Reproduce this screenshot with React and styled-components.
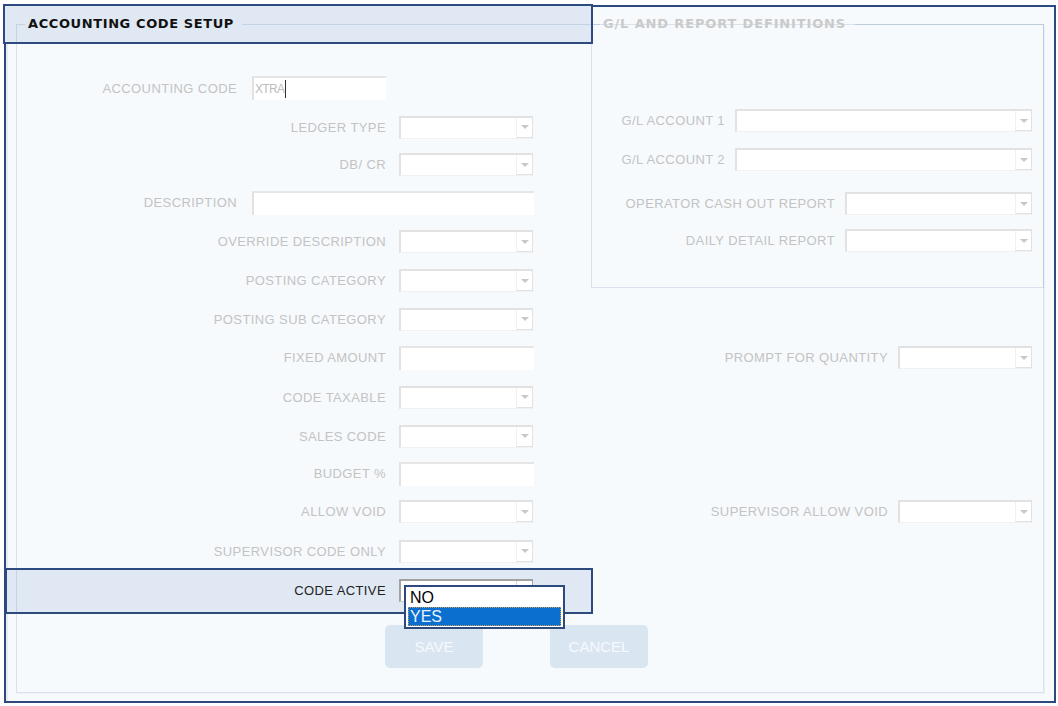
import styled, { createGlobalStyle } from 'styled-components';

const GlobalStyle = createGlobalStyle`
  html, body {
    margin: 0;
    padding: 0;
    background: #ffffff;
  }

  body {
    font-family: 'Liberation Sans', Arial, sans-serif;
  }

  * {
    box-sizing: border-box;
  }
`;

const topRows = [
  { label: 'ACCOUNTING CODE', kind: 'input', width: 134, height: 40, wide: true, value: 'XTRA', caret: true },
  { label: 'LEDGER TYPE', height: 38 },
  { label: 'DB/ CR', height: 37 },
  { label: 'DESCRIPTION', kind: 'input', width: 282, height: 39, wide: true },
  { label: 'OVERRIDE DESCRIPTION', height: 39 },
  { label: 'POSTING CATEGORY', height: 39 }
];

const bottomRows = [
  { label: 'POSTING SUB CATEGORY', height: 38 },
  { label: 'FIXED AMOUNT', kind: 'input', height: 39, right: 'PROMPT FOR QUANTITY' },
  { label: 'CODE TAXABLE', height: 40 },
  { label: 'SALES CODE', height: 38 },
  { label: 'BUDGET %', kind: 'input', height: 37 },
  { label: 'ALLOW VOID', height: 39, right: 'SUPERVISOR ALLOW VOID' },
  { label: 'SUPERVISOR CODE ONLY', height: 40 },
  { label: 'CODE ACTIVE', height: 39, active: true }
];

const glRows = [
  { label: 'G/L ACCOUNT 1', width: 297, mt: 0 },
  { label: 'G/L ACCOUNT 2', width: 297, mt: 16 },
  { label: 'OPERATOR CASH OUT REPORT', width: 187, mt: 21 },
  { label: 'DAILY DETAIL REPORT', width: 187, mt: 14 }
];

const Select = ({ width = 134, strong, children }) => (
  <SelectBox $width={width} $strong={strong}>
    <SelectValue />
    <ArrowBox $strong={strong} />
    {children}
  </SelectBox>
);

const Control = ({ row }) => {
  if (row.kind === 'input') {
    return (
      <TextInput $width={row.width || 135}>
        {row.value && <InputText>{row.value}</InputText>}
        {row.caret && <Caret />}
      </TextInput>
    );
  }

  if (row.active) {
    return (
      <Select strong>
        <DropList>
          <DropItem>NO</DropItem>
          <DropItem $selected>YES</DropItem>
        </DropList>
      </Select>
    );
  }

  return <Select />;
};

const LeftField = ({ row }) => (
  <FieldRow $labelWidth={row.wide ? 220 : 369} $gap={row.wide ? 15 : 13}>
    <Label $active={row.active}>{row.label}</Label>
    <Control row={row} />
  </FieldRow>
);

export default function App() {
  return (
    <Page>
      <GlobalStyle />
      <Frame>
        <Highlight $left={-3} $top={-3} $width={590} $height={40} />
        <Highlight $left={-1} $top={561} $width={588} $height={46} />

        <Group>
          <Legend>ACCOUNTING CODE SETUP</Legend>
          <Body>
            <TopSection>
              <LeftStack>
                {topRows.map((row) => (
                  <RowSlot key={row.label} $height={row.height}>
                    <LeftField row={row} />
                  </RowSlot>
                ))}
              </LeftStack>

              <GLGroup>
                <Legend $muted $after={9} $spacing={0.85}>
                  G/L AND REPORT DEFINITIONS
                </Legend>
                <GLBody>
                  {glRows.map((row) => (
                    <RightRow key={row.label} $mt={row.mt}>
                      <Label>{row.label}</Label>
                      <Select width={row.width} />
                    </RightRow>
                  ))}
                </GLBody>
              </GLGroup>
            </TopSection>

            {bottomRows.map((row) => (
              <SplitRow key={row.label} $height={row.height}>
                <LeftField row={row} />
                {row.right && (
                  <RightRow>
                    <Label>{row.right}</Label>
                    <Select />
                  </RightRow>
                )}
              </SplitRow>
            ))}

            <ButtonBar>
              <Button>SAVE</Button>
              <Button>CANCEL</Button>
            </ButtonBar>
          </Body>
        </Group>
      </Frame>
    </Page>
  );
}

const Page = styled.div`
  width: 1058px;
  height: 706px;
  padding: 5px 2px 3px 4px;
`;

const Frame = styled.div`
  position: relative;
  z-index: 0;
  display: flex;
  flex-direction: column;
  height: 698px;
  padding: 9px 10px 8px 10px;
  border: 2px solid #2c4a7e;
  background: #f7fafd;
  box-shadow: inset 2px 0 0 #e8ecf1;
`;

const Highlight = styled.div`
  position: absolute;
  z-index: -1;
  left: ${(props) => props.$left}px;
  top: ${(props) => props.$top}px;
  width: ${(props) => props.$width}px;
  height: ${(props) => props.$height}px;
  border: 2px solid #2c4a7e;
  background: #dfe8f3;
  pointer-events: none;
`;

const Group = styled.fieldset`
  flex: 1;
  min-width: 0;
  margin: 0;
  padding: 0;
  border: 1px solid rgba(50, 95, 150, 0.15);
  box-shadow: 1px 1px 0 rgba(50, 95, 150, 0.06);
`;

const Legend = styled.legend`
  margin-left: 8px;
  padding: 0 ${(props) => props.$after || 8}px 0 3px;
  font-family: 'DejaVu Sans', Verdana, sans-serif;
  font-size: 13px;
  font-weight: bold;
  line-height: 16px;
  letter-spacing: ${(props) => props.$spacing || 0.6}px;
  color: ${(props) => (props.$muted ? '#cacaca' : '#111111')};
`;

const Body = styled.div`
  display: flex;
  flex-direction: column;
`;

const TopSection = styled.div`
  display: grid;
  grid-template-columns: 574px 1fr;
  align-items: start;
`;

const LeftStack = styled.div`
  padding-top: 36px;
`;

const RowSlot = styled.div`
  height: ${(props) => props.$height}px;
`;

const GLGroup = styled(Group)`
  flex: none;
  height: 272px;
  margin: -16px -1px 0 0;
  box-shadow: none;
`;

const GLBody = styled.div`
  display: flex;
  flex-direction: column;
  padding-top: 77px;
`;

const SplitRow = styled.div`
  display: grid;
  grid-template-columns: 574px 1fr;
  align-items: center;
  height: ${(props) => props.$height}px;
`;

const FieldRow = styled.div`
  display: grid;
  grid-template-columns: ${(props) => props.$labelWidth}px auto;
  column-gap: ${(props) => props.$gap}px;
  align-items: center;
  justify-items: start;
  height: 100%;
`;

const RightRow = styled.div`
  display: flex;
  justify-content: flex-end;
  align-items: center;
  gap: 10px;
  height: 23px;
  margin-top: ${(props) => props.$mt || 0}px;
  padding-right: 11px;
`;

const Label = styled.span`
  justify-self: end;
  font-size: 13px;
  letter-spacing: 0.4px;
  white-space: nowrap;
  color: ${(props) => (props.$active ? '#222222' : '#c3c3c3')};
`;

const SelectBox = styled.div`
  position: relative;
  display: flex;
  width: ${(props) => props.$width}px;
  height: 23px;
  background: #ffffff;
  border: 1px solid ${(props) => (props.$strong ? '#a2a2a2' : '#e2e2e2')};
  border-top-width: 2px;
  border-left-width: 2px;
  border-bottom-color: ${(props) => (props.$strong ? '#d0d0d0' : '#f1f1f1')};
`;

const SelectValue = styled.div`
  flex: 1;
`;

const ArrowBox = styled.div`
  display: flex;
  align-items: center;
  justify-content: center;
  width: 16px;
  border-left: 1px solid ${(props) => (props.$strong ? '#d4d4d4' : '#f0f0f0')};
  border-bottom: 1px solid ${(props) => (props.$strong ? '#b8b8b8' : '#e2e2e2')};

  &::after {
    content: '';
    border-left: 4px solid transparent;
    border-right: 4px solid transparent;
    border-top: 4px solid ${(props) => (props.$strong ? '#777777' : '#c8c8c8')};
  }
`;

const TextInput = styled.div`
  display: flex;
  align-items: center;
  width: ${(props) => props.$width}px;
  height: 24px;
  padding-left: 1px;
  background: #ffffff;
  border-top: 2px solid #e6e6e6;
  border-left: 2px solid #e2e2e2;
`;

const InputText = styled.span`
  font-size: 12px;
  letter-spacing: -0.7px;
  color: #bdbdbd;
`;

const Caret = styled.span`
  width: 1px;
  height: 18px;
  margin-left: 1px;
  background: #333333;
`;

const DropList = styled.div`
  position: absolute;
  top: 4px;
  left: 3px;
  z-index: 2;
  width: 161px;
  height: 44px;
  padding: 1px 2px;
  background: #ffffff;
  border: 2px solid #2c4a7e;
`;

const DropItem = styled.div`
  height: 19px;
  padding-left: 2px;
  font-size: 16px;
  line-height: 19px;
  color: ${(props) => (props.$selected ? '#eaf2fb' : '#000000')};
  background: ${(props) => (props.$selected ? '#0b6fcf' : 'transparent')};
  outline: ${(props) => (props.$selected ? '1px dotted #c99a5a' : 'none')};
  outline-offset: -1px;
`;

const ButtonBar = styled.div`
  display: flex;
  gap: 67px;
  margin-top: 15px;
  padding-left: 368px;
`;

const Button = styled.button`
  width: 98px;
  height: 43px;
  border: none;
  border-radius: 5px;
  background: #d9e6f2;
  font-family: 'Liberation Sans', Arial, sans-serif;
  font-size: 15px;
  color: #f6f9fc;
`;
